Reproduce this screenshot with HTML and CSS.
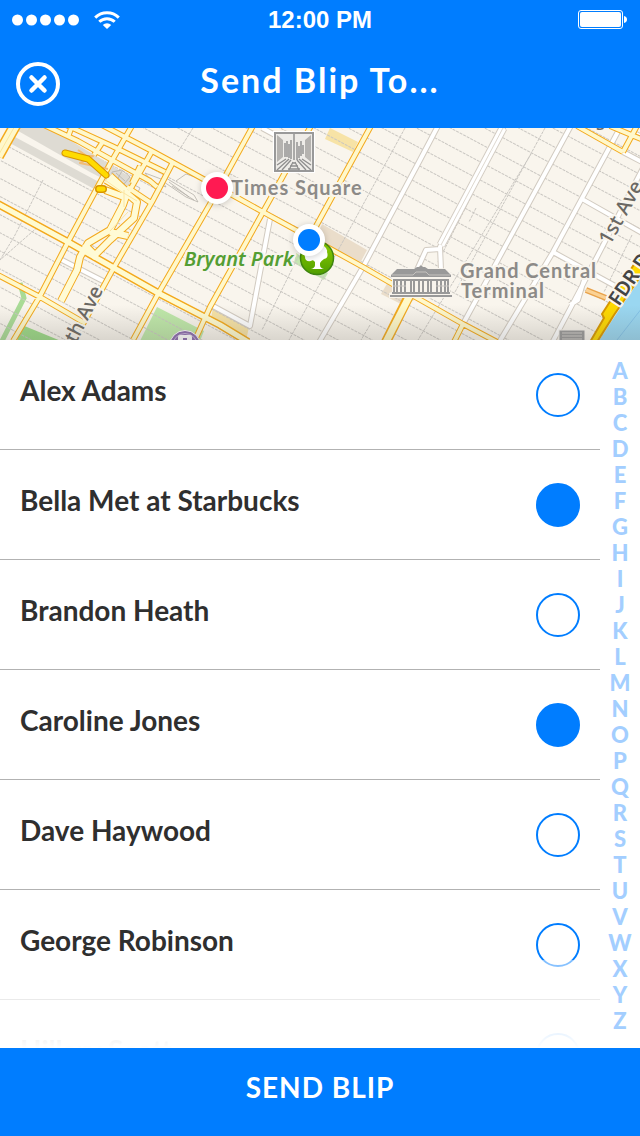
FILE: index.html
```html
<!DOCTYPE html>
<html lang="en">
<head>
<meta charset="utf-8">
<meta name="viewport" content="width=device-width, initial-scale=1">
<title>Send Blip To...</title>
<link rel="stylesheet" href="styles.css">
</head>
<body>
<header class="top">
  <div class="status">
    <div class="status-left">
      <svg class="signal" width="68" height="12" viewBox="0 0 68 12" aria-hidden="true"><g fill="#fff"><circle cx="5.5" cy="6" r="5.5"/><circle cx="19.5" cy="6" r="5.5"/><circle cx="33.5" cy="6" r="5.5"/><circle cx="47.5" cy="6" r="5.5"/><circle cx="61.5" cy="6" r="5.5"/></g></svg>
      <svg width="26" height="18" viewBox="0 0 26 18" aria-hidden="true"><g fill="none" stroke="#fff" stroke-width="3"><path d="M1.2 6.6a17 17 0 0 1 23.6 0"/><path d="M5.3 10.8a11 11 0 0 1 15.4 0"/></g><path d="M8.8 14a6 6 0 0 1 8.4 0L13 18z" fill="#fff"/></svg>
    </div>
    <time class="clock">12:00 PM</time>
    <svg class="battery" width="50" height="20" viewBox="0 0 50 20" aria-hidden="true"><rect x=".5" y=".5" width="44" height="18" rx="2.5" fill="none" stroke="#fff"/><rect x="2" y="2" width="41" height="15" rx="2" fill="#fff"/><path d="M46 6q3 .8 3 3.500T46 13z" fill="#fff"/></svg>
  </div>
  <div class="nav">
    <button class="close" type="button" aria-label="Close">
      <svg width="44" height="44" viewBox="0 0 44 44" aria-hidden="true"><g fill="none" stroke="#fff" stroke-width="4" stroke-linecap="round"><circle cx="22" cy="22" r="20"/><path d="M15.500 15.500l13 13m0-13l-13 13" stroke-width="4.500"/></g></svg>
    </button>
    <h1 class="title">Send Blip To...</h1>
  </div>
</header>

<svg class="map" viewBox="0 128 640 212" preserveAspectRatio="xMidYMid slice" role="img" aria-label="Map of Midtown Manhattan">
  <defs>
    <pattern id="streets" width="400" height="16" patternUnits="userSpaceOnUse" patternTransform="translate(0 205) rotate(28)"><path d="M0 8.500H400" stroke="#c9c6c1" stroke-dasharray="3 1"/></pattern>
    <linearGradient id="shade" x1="0" y1="0" x2="0" y2="1"><stop offset="0" stop-color="#5d5952" stop-opacity="0"/><stop offset="1" stop-color="#5d5952" stop-opacity=".2"/></linearGradient>
    <linearGradient id="park" x1="0" y1="0" x2="0" y2="1"><stop offset="0" stop-color="#8fd000"/><stop offset="1" stop-color="#4f9d00"/></linearGradient>
    <path id="yellow" d="M13 341L40 296L68 242L110 164L133 124M83 324L113 269L152 202L172 164M133 340L158 294L210 204L254 124M195 340L210 307L263 212L312 124M309 239L372 124M-2 204L68 242L160 294L220 325L248 342M-2 275L40 297L83 322M100 124L152 151L207 181L263 212L307 236L363 267L410 294L463 324L497 342M44 125L78 141L112 160L150 181L157 187M66 125L112 146L165 172M72 126L68 137M102 143L94 155M152 151L130 190M127 187L151 203M140 166L132 183M463 324L454 342M577 126L623 152M610 126L641 139M623 152L638 124"/>
    <path id="ramps" d="M106 180L123 190L137 202L134 218L110 240L92 258M128 190L123 205L110 230L88 243L80 257L77 270L61 301M110 232L128 236M84 244L96 256M105 190L124 197M110 176L126 191"/>
    <path id="white" d="M440 122L420 160L363 267L318 344M505 124L440 247L441 270M440 249L426 250L416 272M573 122L463 324M621 126L553 252L498 344M644 166L597 257L580 290L552 343M582 199L644 234M553 252L617 287M623 152L644 163M570 305L578 300L584 280M270 219L250 326L213 306M60 259L105 282M262 128L290 143M636 134L644 138"/>
  </defs>
  <rect y="128" width="640" height="212" fill="#f9f5ed"/>
  <g class="blocks">
    <path d="M13 128L50 128L135 180L125 190L90 172z" fill="#dedbd3"/>
    <path d="M8 142L15 137L99 182L96 190z" fill="#dedbd3"/>
    <path d="M157 307L204 331L200 341H140z" fill="#bfe8a9"/>
    <path d="M22 325L61 341H17z" fill="#9cda87"/>
    <path d="M20 283L24 298L2 341" fill="none" stroke="#a9db96" stroke-width="5"/>
    <path d="M296 253L328 273L324 280L294 263z" fill="#c5e6b2"/>
    <path d="M330 128L358 142L353 152L325 139z" fill="#f7e3a6"/>
    <path d="M213 308L249 327L246 341L210 323z" fill="#f7e3a6"/>
    <path d="M322 224L367 250L359 265L315 240z" fill="#eaddca"/>
    <path d="M388 282L417 298L405 306L381 294z" fill="#eaddca"/>
  </g>
  <path d="M0 128H640V340H0zM13 128L8 142L96 190L99 184L125 190L135 180L50 128zM322 224L315 240L359 265L367 250z" fill="url(#streets)" fill-rule="evenodd"/>
  <path d="M193 128L178 152M40 225L0 260M43 180L14 237L0 260M299 255L262 330M405 128L324 276L289 340M472 195L438 262M545 128L455 292M632 235L604 292M531 154L418 340M476 208L469 222M640 264L625 292M370 325L361 340" fill="none" stroke="#c9c6c1" stroke-dasharray="3 1"/>
  <g fill="none" stroke="#b5b1aa"><path d="M112 172l10-2 8 7-6 7-12-5z M116 173l9 8m-3-10l-5 9m14 3l9 5-3 6-8-3zM145 173l16 6 5 8-14-5zM166 178l28 17 4 7-12-5-22-15zM172 186l22 14M176 181l10-7 12 4M169 182l20 15" stroke-width=".8"/></g>
  <g fill="none" stroke-linejoin="round">
    <use href="#white" stroke="#d2cbc1" stroke-width="6"/>
    <use href="#white" stroke="#fff" stroke-width="4"/>
    <path d="M503 128L441 245" stroke="#d2cbc1" stroke-width="9"/><path d="M503 128L441 245" stroke="#fff" stroke-width="7"/><path d="M503 128L441 245" stroke="#ddd7ce"/>
    <use href="#yellow" stroke="#f3a91c" stroke-width="6"/>
    <use href="#ramps" stroke="#f3a91c" stroke-width="8"/>
    <path d="M-2 204L68 242L160 294L220 325L248 342" stroke="#f3a91c" stroke-width="8"/>
    <path d="M410 294L386 342" stroke="#f3a91c" stroke-width="10"/>
    <path d="M410 295L386 342" stroke="#fff9c9" stroke-width="7"/>
    <use href="#yellow" stroke="#fff8cb" stroke-width="4"/>
    <path d="M-2 204L68 242L160 294L220 325L248 342" stroke="#fffbd0" stroke-width="5"/>
    <use href="#ramps" stroke="#fffbd5" stroke-width="6"/>
    <path d="M105 180L122 192L137 201M124 190V207M110 231L128 212" stroke="#fbe6a2" stroke-width="1"/>
    <path d="M16 124L-2 156" stroke="#f3a91c" stroke-width="12"/><path d="M16 124L-2 156" stroke="#fff8cb" stroke-width="9"/><path d="M16 124L-2 156" stroke="#fae6a0"/>
    <path d="M74 157L93 156L80 163L108 169M78 150L91 159" stroke="#f2bd76" stroke-width="2"/>
    <path d="M65 153L88 159L106 175" stroke="#d79400" stroke-width="7" stroke-linecap="round"/><path d="M65 153L88 159L106 175" stroke="#ffdb00" stroke-width="5" stroke-linecap="round"/>
    <path d="M99 189h4" stroke="#d79400" stroke-width="8" stroke-linecap="round"/><path d="M99 189h4" stroke="#ffdb00" stroke-width="5" stroke-linecap="round"/>
    <path d="M586 290L606 298" stroke="#e8a24c" stroke-width="6"/><path d="M586 290L606 298" stroke="#fbd294" stroke-width="3"/>
  </g>
  <path d="M598 342L615 316L642 276V342z" fill="#9ad7f1"/><path d="M617 340L642 308" stroke="#83c2e8" fill="none"/>
  <path d="M590 342L604 318L602 314L642 252V274L614 315L597 342z" fill="#ffd900" stroke="#d79800" stroke-width="2"/>

  <g transform="translate(274 132)">
    <rect width="40" height="40" fill="#fff" stroke="#fff" stroke-width="2"/><rect x="1" y="1" width="38" height="38" fill="#eeece8" stroke="#999" stroke-width="2"/>
    <path d="M3 3L9 8V25L3 30zM37 3L31 8V25L37 30z" fill="#b5b3b0"/>
    <path d="M11 11v14m2-16v16m2-13v14m2-18v19m3-21v22m3-18v18m2-14v12m2-17v15m2-11v9M20 2v4" stroke="#8e8e8e" stroke-width="1.400"/>
    <path d="M3 38L15 27M8 38L17 28M32 38L23 28M37 38L25 27M3 33L12 27M37 33L28 27M15 38L19 30M25 38L21 30M14 37h12M16 34h8M18 31h4" stroke="#8e8e8e" stroke-width="1.300"/>
  </g>
  <g transform="translate(390 265)">
    <path d="M-1 33V28L2 27V13L0 8L9 3H27L31 -1L35 3H53L62 8V13L60 14V27L63 30V33z" fill="#f8f4ed"/>
    <path d="M1 10L7 4H24L27 2H29L31 0L33 2H35L38 4H55L61 10V12H1zM3 14H59V16H3zM2 27H60V29H2zM0 30H62V32H0z" fill="#999"/>
    <path d="M4 16V27M7 16V27M11 16V27M15 16V27M21 16V27M24 16V27M29 16V27M33 16V27M38 16V27M41 16V27M47 16V27M51 16V27M55 16V27M58 16V27" stroke="#999" stroke-width="2"/>
    <path d="M2 10H23L26 7H36L39 10H60M3 21H16M46 21H59" stroke="#c5c2be" fill="none"/>
  </g>
  <g transform="translate(559 330)"><rect width="26" height="12" fill="#999" stroke="#f8f4ed"/><path d="M3 3H23M3 6H23M3 9H23" stroke="#d0ceca"/></g>
  <circle cx="185" cy="346" r="15.500" fill="#8d6eaf" stroke="#fff"/><circle cx="185" cy="346" r="12.500" fill="none" stroke="#c9b6de"/><rect x="178" y="335" width="14" height="12" rx="2" fill="#fff"/><path d="M183 338h4v2h-4z" fill="#8d6eaf"/>
  <circle cx="317" cy="258" r="16.500" fill="url(#park)" stroke="#3f8410" stroke-width="1.500"/>
  <path d="M311 269Q315 268 315 265V262Q313 259 311 261Q305 262 305 257Q303 252 308 249L324 246Q328 249 327 252Q329 258 324 259Q321 261 320 263V265Q320 268 324 269z" fill="#fff"/>

  <g class="place">
    <text x="231" y="195">Times Square</text>
    <text x="460" y="278">Grand Central</text>
    <text x="461" y="298">Terminal</text>
  </g>
  <text class="park-name" x="184" y="266">Bryant Park</text>
  <text class="avenue" transform="translate(76 344) rotate(-63)">th Ave</text>
  <text class="avenue" transform="translate(610 246) rotate(-61)">1st Ave</text>
  <text class="avenue highway" transform="translate(619 307) rotate(-56)">FDR Dr</text>
  <text class="avenue small" x="596" y="130">S</text>
  <rect y="305" width="640" height="35" fill="url(#shade)"/>
  <g class="pins">
    <circle cx="217" cy="188" r="16" fill="#fff"/><circle cx="217" cy="188" r="11" fill="#ff1a52"/>
    <circle cx="309" cy="240" r="16" fill="#fff"/><circle cx="309" cy="240" r="11" fill="#007dff"/>
  </g>
</svg>

<main class="contacts">
  <div class="list">
    <label class="row"><span class="name">Alex Adams</span><input class="pick" type="checkbox"></label>
    <label class="row"><span class="name">Bella Met at Starbucks</span><input class="pick" type="checkbox" checked></label>
    <label class="row"><span class="name">Brandon Heath</span><input class="pick" type="checkbox"></label>
    <label class="row"><span class="name">Caroline Jones</span><input class="pick" type="checkbox" checked></label>
    <label class="row"><span class="name">Dave Haywood</span><input class="pick" type="checkbox"></label>
    <label class="row"><span class="name">George Robinson</span><input class="pick" type="checkbox"></label>
    <label class="row"><span class="name">Hillary Scott</span><input class="pick" type="checkbox"></label>
  </div>
  <nav class="index" aria-label="Alphabetical index">
    <a href="#a">A</a><a href="#b">B</a><a href="#c">C</a><a href="#d">D</a><a href="#e">E</a><a href="#f">F</a><a href="#g">G</a><a href="#h">H</a><a href="#i">I</a><a href="#j">J</a><a href="#k">K</a><a href="#l">L</a><a href="#m">M</a><a href="#n">N</a><a href="#o">O</a><a href="#p">P</a><a href="#q">Q</a><a href="#r">R</a><a href="#s">S</a><a href="#t">T</a><a href="#u">U</a><a href="#v">V</a><a href="#w">W</a><a href="#x">X</a><a href="#y">Y</a><a href="#z">Z</a>
  </nav>
</main>

<button class="send" type="button">SEND BLIP</button>
</body>
</html>
```
FILE: styles.css
```css
* {
  box-sizing: border-box;
}

body {
  margin: 0;
  height: 100vh;
  display: flex;
  flex-direction: column;
  background: #fff;
  color: #2f2f2f;
  font-family: Lato, "Open Sans", sans-serif;
}

.top {
  flex: none;
  background: #007dff;
  color: #fff;
}

.status {
  display: grid;
  grid-template-columns: 1fr auto 1fr;
  align-items: center;
  height: 40px;
  padding: 0 12px;
}

.status-left {
  display: flex;
  align-items: center;
  gap: 14px;
}

.clock {
  font: bold 24px/40px "Liberation Sans", Arial, sans-serif;
}

.battery {
  justify-self: end;
}

.nav {
  display: grid;
  grid-template-columns: 44px 1fr 44px;
  align-items: center;
  height: 88px;
  padding: 0 16px;
}

.close {
  width: 44px;
  height: 44px;
  padding: 0;
  border: 0;
  background: none;
}

.close svg {
  display: block;
}

.title {
  margin: 0;
  padding-bottom: 8px;
  font-size: 34px;
  line-height: 40px;
  font-weight: 700;
  letter-spacing: 2px;
  text-align: center;
}

.map {
  flex: none;
  display: block;
  width: 100%;
  height: 212px;
}

.place,
.park-name,
.avenue {
  font-family: "Noto Sans", sans-serif;
  font-size: 20px;
  font-weight: 500;
  fill: #8c8a87;
  stroke: #f9f5ed;
  stroke-width: 4px;
  stroke-linejoin: round;
  paint-order: stroke;
}

.place {
  font-family: Lato, sans-serif;
  font-weight: 700;
  letter-spacing: 1px;
}

.park-name {
  font-weight: 600;
  font-style: italic;
  fill: #549e33;
}

.avenue {
  fill: #6b6863;
}

.highway {
  font-weight: 600;
  fill: #444;
}

.small {
  font-size: 16px;
}

.pins {
  filter: drop-shadow(0 1px 3px rgba(0, 0, 0, .2));
}

.contacts {
  flex: 1;
  min-height: 0;
  display: flex;
  overflow: hidden;
}

.list {
  position: relative;
  flex: 1;
  overflow: hidden;
}

.list::after {
  content: "";
  position: absolute;
  left: 0;
  right: 0;
  bottom: 0;
  height: 88px;
  background: linear-gradient(rgba(255, 255, 255, .5), #fff);
  pointer-events: none;
}

.row {
  display: flex;
  align-items: center;
  justify-content: space-between;
  height: 110px;
  padding: 0 20px;
  border-bottom: 1px solid #b2b2b2;
}

.name {
  padding-bottom: 10px;
  font-size: 28px;
  line-height: 32px;
  font-weight: 700;
}

.pick {
  appearance: none;
  flex: none;
  width: 44px;
  height: 44px;
  margin: 0;
  border: 2px solid #007dff;
  border-radius: 50%;
  background: #fff;
}

.pick:checked {
  background: #007dff;
}

.index {
  flex: none;
  display: flex;
  flex-direction: column;
  width: 40px;
  padding-top: 18px;
  text-align: center;
}

.index a {
  color: #a3ceff;
  font-size: 22px;
  line-height: 26px;
  font-weight: 900;
  text-decoration: none;
}

.send {
  flex: none;
  height: 88px;
  padding: 0 0 10px;
  border: 0;
  background: #007dff;
  color: #fff;
  font: 700 28px/32px Lato, "Open Sans", sans-serif;
  letter-spacing: 1px;
}
```
